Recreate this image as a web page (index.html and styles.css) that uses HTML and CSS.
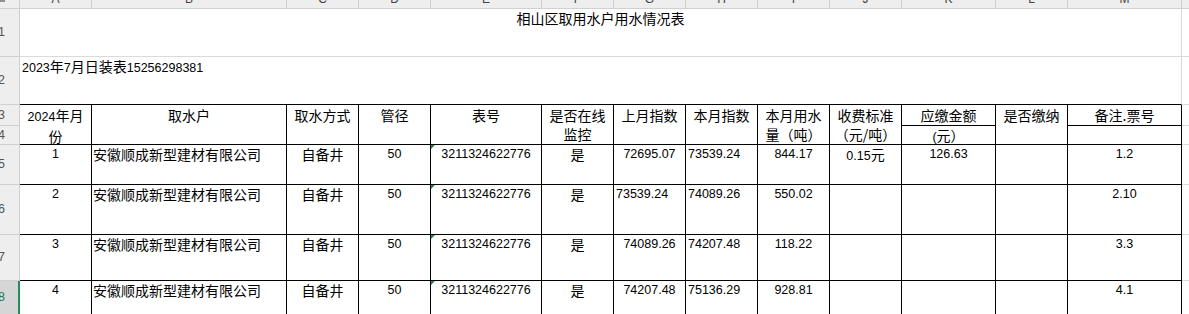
FILE: index.html
```html
<!DOCTYPE html>
<html lang="zh-CN">
<head>
<meta charset="utf-8">
<title>相山区取用水户用水情况表</title>
<link rel="stylesheet" href="styles.css">
</head>
<body>
<div class="sheet">
  <!-- column headers -->
  <div class="ch corner"><i class="corner-mark"></i></div>
  <div class="ch"><span>A</span></div>
  <div class="ch"><span>B</span></div>
  <div class="ch"><span>C</span></div>
  <div class="ch"><span>D</span></div>
  <div class="ch"><span>E</span></div>
  <div class="ch"><span>F</span></div>
  <div class="ch"><span>G</span></div>
  <div class="ch"><span>H</span></div>
  <div class="ch"><span>I</span></div>
  <div class="ch"><span>J</span></div>
  <div class="ch"><span>K</span></div>
  <div class="ch"><span>L</span></div>
  <div class="ch"><span>M</span></div>
  <div class="ch"><span>N</span></div>

  <!-- row 1 -->
  <div class="rh"><span>1</span></div>
  <div class="c span13 ctr">相山区取用水户用水情况表</div>
  <div class="c"></div>

  <!-- row 2 -->
  <div class="rh"><span>2</span></div>
  <div class="c span13 pad bb">
    <span class="n">2023</span>年<span class="n">7</span>月日装表<span class="n">15256298381</span>
  </div>
  <div class="c"></div>

  <!-- row 3 (header, merged with row 4) -->
  <div class="rh"><span>3</span></div>
  <div class="c t hd ctr rows2"><span class="n">2024</span>年月<br>份</div>
  <div class="c t hd ctr rows2">取水户</div>
  <div class="c t hd ctr rows2">取水方式</div>
  <div class="c t hd ctr rows2">管径</div>
  <div class="c t hd ctr rows2">表号</div>
  <div class="c t hd ctr rows2">是否在线<br>监控</div>
  <div class="c t hd ctr rows2">上月指数</div>
  <div class="c t hd ctr rows2">本月指数</div>
  <div class="c t hd ctr rows2">本月用水<br>量（吨）</div>
  <div class="c t hd ctr rows2">收费标准<br>（元/吨）</div>
  <div class="c t hd ctr">应缴金额</div>
  <div class="c t hd ctr rows2">是否缴纳</div>
  <div class="c t hd ctr">备注.票号</div>
  <div class="c"></div>

  <!-- row 4 -->
  <div class="rh"><span>4</span></div>
  <div class="c t r4 ctr"><span class="n">(</span>元）</div>
  <div class="c t r4"></div>
  <div class="c"></div>

  <!-- row 5 -->
  <div class="rh"><span>5</span></div>
  <div class="c t num ctr">1</div>
  <div class="c t lpad">安徽顺成新型建材有限公司</div>
  <div class="c t ctr">自备井</div>
  <div class="c t num ctr">50</div>
  <div class="c t num ctr flag">3211324622776</div>
  <div class="c t ctr">是</div>
  <div class="c t num ctr">72695.07</div>
  <div class="c t num pad">73539.24</div>
  <div class="c t num ctr">844.17</div>
  <div class="c t num ctr">0.15<span class="cjk">元</span></div>
  <div class="c t num ctr">126.63</div>
  <div class="c t"></div>
  <div class="c t num ctr">1.2</div>
  <div class="c"></div>

  <!-- row 6 -->
  <div class="rh"><span>6</span></div>
  <div class="c t num ctr">2</div>
  <div class="c t lpad">安徽顺成新型建材有限公司</div>
  <div class="c t ctr">自备井</div>
  <div class="c t num ctr">50</div>
  <div class="c t num ctr flag">3211324622776</div>
  <div class="c t ctr">是</div>
  <div class="c t num pad">73539.24</div>
  <div class="c t num pad">74089.26</div>
  <div class="c t num ctr">550.02</div>
  <div class="c t"></div>
  <div class="c t"></div>
  <div class="c t"></div>
  <div class="c t num ctr">2.10</div>
  <div class="c"></div>

  <!-- row 7 -->
  <div class="rh"><span>7</span></div>
  <div class="c t num ctr">3</div>
  <div class="c t lpad">安徽顺成新型建材有限公司</div>
  <div class="c t ctr">自备井</div>
  <div class="c t num ctr">50</div>
  <div class="c t num ctr flag">3211324622776</div>
  <div class="c t ctr">是</div>
  <div class="c t num ctr">74089.26</div>
  <div class="c t num pad">74207.48</div>
  <div class="c t num ctr">118.22</div>
  <div class="c t"></div>
  <div class="c t"></div>
  <div class="c t"></div>
  <div class="c t num ctr">3.3</div>
  <div class="c"></div>

  <!-- row 8 (selected) -->
  <div class="rh sel"><span>8</span></div>
  <div class="c t num ctr">4</div>
  <div class="c t lpad">安徽顺成新型建材有限公司</div>
  <div class="c t ctr">自备井</div>
  <div class="c t num ctr">50</div>
  <div class="c t num ctr flag">3211324622776</div>
  <div class="c t ctr">是</div>
  <div class="c t num ctr">74207.48</div>
  <div class="c t num pad">75136.29</div>
  <div class="c t num ctr">928.81</div>
  <div class="c t"></div>
  <div class="c t"></div>
  <div class="c t"></div>
  <div class="c t num ctr">4.1</div>
  <div class="c"></div>
</div>
</body>
</html>
```

FILE: styles.css
```css
html, body {
  margin: 0;
  padding: 0;
  overflow: hidden;
  background: #ffffff;
}

body {
  width: 1189px;
  height: 314px;
}

.sheet {
  display: grid;
  grid-template-columns: 20px 72px 195px 72px 72px 111px 72px 72px 72px 72px 72px 94px 72px 114px 80px;
  grid-template-rows: 9px 48px 48px 21px 19px 40px 50px 46px 34px;
  font-family: "Noto Sans CJK SC", sans-serif;
  font-size: 14px;
  line-height: 19px;
  color: #000000;
}

.sheet > div {
  box-sizing: border-box;
  min-width: 0;
  overflow: hidden;
  border-right: 1px solid #dadada;
  border-bottom: 1px solid #dadada;
  white-space: nowrap;
}

/* column header band */
.sheet > .ch {
  background: #eeeeee;
  border-color: #d0d0d0;
  font-family: "Liberation Sans", sans-serif;
  font-size: 12px;
  line-height: 14px;
  color: #444444;
  text-align: center;
}

.ch span {
  display: block;
  margin-top: -8px;
}

.corner-mark {
  display: block;
  width: 5px;
  height: 2px;
  background: #8f8f8f;
}

/* row header */
.sheet > .rh {
  background: #eeeeee;
  border-color: #d0d0d0;
  font-family: "Liberation Sans", sans-serif;
  font-size: 12.5px;
  color: #555555;
  display: flex;
  align-items: center;
}

.rh span {
  margin-left: -2px;
}

.sheet > .rh.sel {
  background: #d6d6d6;
  border-right: 2px solid #1e8f5f;
  color: #1a7a5a;
}

/* cells */
.span13 {
  grid-column: span 13;
}

.rows2 {
  grid-row: span 2;
}

.sheet > .t {
  border-right-color: #000000;
  border-bottom-color: #000000;
}

.sheet > .bb {
  border-bottom-color: #000000;
}

.ctr {
  text-align: center;
}

.pad {
  padding: 0 2px;
}

.lpad {
  padding-left: 1px;
}

.hd {
  padding-top: 1px;
}

.r4 {
  line-height: 18px;
}

.num {
  font-family: "Liberation Sans", "Noto Sans CJK SC", sans-serif;
  font-size: 12.5px;
}

.n {
  font-family: "Liberation Sans", sans-serif;
  font-size: 12.5px;
}

.cjk {
  font-family: "Noto Sans CJK SC", sans-serif;
  font-size: 14px;
}

/* "number stored as text" indicator */
.flag {
  position: relative;
}

.flag::before {
  content: "";
  position: absolute;
  left: 0;
  top: 0;
  border-top: 4px solid #1f8a3c;
  border-right: 4px solid transparent;
}
```
